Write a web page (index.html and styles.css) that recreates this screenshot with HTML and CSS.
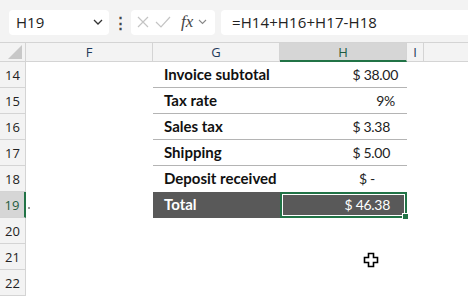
FILE: index.html
```html
<!DOCTYPE html>
<html lang="en">
<head>
  <meta charset="UTF-8" />
  <title>Invoice total</title>
  <link rel="stylesheet" href="styles.css">
</head>
<body>

  <div class="toolbar">
    <div class="namebox">
      <span>H19</span>
      <svg class="chev" width="10" height="6" viewBox="0 0 10 6"><path d="M1 1l4 4 4-4" fill="none" stroke="#333" stroke-width="1.3"/></svg>
    </div>
    <div class="dots">⋮</div>
    <div class="funcbox">
      <svg width="14" height="14" viewBox="0 0 14 14"><path d="M2 2l10 10M12 2L2 12" stroke="#c4c4c4" stroke-width="1.2"/></svg>
      <svg width="16" height="14" viewBox="0 0 16 14"><path d="M1 7l5 5L15 2" fill="none" stroke="#c4c4c4" stroke-width="1.2"/></svg>
      <span class="fx">fx</span>
      <svg width="9" height="6" viewBox="0 0 9 6"><path d="M1 1l3.5 3.5L8 1" fill="none" stroke="#888" stroke-width="1.1"/></svg>
    </div>
    <div class="formula">=H14+H16+H17-H18</div>
  </div>

  <div class="sheet">
    <div class="corner"><svg width="14" height="14" viewBox="0 0 14 14"><path d="M14 0v14H0z" fill="#c8c8c8"/></svg></div>
    <div class="colhead">F</div>
    <div class="colhead">G</div>
    <div class="colhead sel">H</div>
    <div class="colhead">I</div>
    <div class="colhead blank"></div>

    <div class="rowhead">14</div><div class="cell"></div>
    <div class="cell label line">Invoice subtotal</div><div class="cell value line pr9">$ 38.00</div>
    <div class="cell"></div><div class="cell"></div>

    <div class="rowhead">15</div><div class="cell"></div>
    <div class="cell label line">Tax rate</div><div class="cell value line pr12">9%</div>
    <div class="cell"></div><div class="cell"></div>

    <div class="rowhead">16</div><div class="cell"></div>
    <div class="cell label line">Sales tax</div><div class="cell value line pr17">$ 3.38</div>
    <div class="cell"></div><div class="cell"></div>

    <div class="rowhead">17</div><div class="cell"></div>
    <div class="cell label line">Shipping</div><div class="cell value line pr17">$ 5.00</div>
    <div class="cell"></div><div class="cell"></div>

    <div class="rowhead">18</div><div class="cell"></div>
    <div class="cell label">Deposit received</div><div class="cell value pr32">$ -</div>
    <div class="cell"></div><div class="cell"></div>

    <div class="rowhead sel">19<span class="speck"></span></div><div class="cell"></div>
    <div class="cell label total">Total</div>
    <div class="cell value total active pr17"><span class="handle"></span>$ 46.38</div>
    <div class="cell"></div><div class="cell"></div>

    <div class="rowhead">20</div><div class="cell"></div><div class="cell"></div><div class="cell"></div><div class="cell"></div><div class="cell"></div>
    <div class="rowhead">21</div><div class="cell"></div><div class="cell"></div><div class="cell"></div><div class="cell"></div><div class="cell"></div>
    <div class="rowhead">22</div><div class="cell"></div><div class="cell"></div><div class="cell"></div><div class="cell"></div><div class="cell"></div>

    <svg class="cursor" width="16" height="16" viewBox="0 0 16 16">
      <path d="M5.5 1.5h5v4h4v5h-4v4h-5v-4h-4v-5h4z" fill="#fff" stroke="#000" stroke-width="1.6"/>
    </svg>
  </div>

</body>
</html>
```

FILE: styles.css
```css
body {
  margin: 0;
  width: 468px;
  height: 296px;
  overflow: hidden;
  background: #fff;
  font-family: 'Open Sans', sans-serif;
  color: #222;
}
.toolbar {
  height: 42px;
  background: #f3f3f3;
  display: flex;
  align-items: center;
  padding-left: 9px;
  box-sizing: border-box;
  padding-top: 2px;
}
.namebox, .funcbox, .formula {
  background: #fff;
  height: 25px;
  border-radius: 4px;
  display: flex;
  align-items: center;
  box-sizing: border-box;
}
.namebox {
  width: 100px;
  padding: 0 6px 0 7px;
  justify-content: space-between;
  font-size: 15px;
  color: #222;
}
.dots {
  width: 22px;
  text-align: center;
  font-size: 15px;
  font-weight: bold;
  color: #444;
}
.funcbox {
  width: 84px;
  padding: 0 5px 0 5px;
  gap: 5px;
}
.fx {
  font-family: 'Liberation Serif', serif;
  font-style: italic;
  font-size: 17px;
  color: #444;
  margin-left: 5px;
}
.formula {
  flex: 1;
  margin-left: 6px;
  padding-left: 11px;
  border-radius: 4px 0 0 4px;
  font-size: 15px;
  letter-spacing: 0.1px;
}
.sheet {
  position: relative;
  display: grid;
  grid-template-columns: 26px 127px 127px 127px 17px 1fr;
  grid-template-rows: 20px repeat(9, 26px);
}
.corner, .colhead {
  background: #f3f3f3;
  border-top: 1px solid #d4d4d4;
  border-bottom: 1px solid #d4d4d4;
  border-right: 1px solid #d4d4d4;
  box-sizing: border-box;
}
.corner {
  display: flex;
  align-items: flex-end;
  justify-content: flex-end;
  padding: 0 3px 2px 0;
}
.colhead {
  text-align: center;
  font-size: 13px;
  line-height: 18px;
  color: #1f3a5a;
}
.colhead.blank {
  border-right: none;
}
.colhead.sel {
  background: #d6d6d6;
  border-bottom: 2px solid #217346;
  color: #1e5c40;
}
.rowhead {
  position: relative;
  background: #f3f3f3;
  border-right: 1px solid #d4d4d4;
  border-bottom: 1px solid #d4d4d4;
  box-sizing: border-box;
  font-size: 13px;
  line-height: 26px;
  text-align: center;
  color: #222;
}
.rowhead.sel {
  background: #d6d6d6;
  border-right: 2px solid #217346;
  color: #1e5c40;
}
.speck {
  position: absolute;
  right: -6px;
  top: 15px;
  width: 2px;
  height: 2px;
  background: #999;
}
.cell {
  box-sizing: border-box;
  font-size: 14px;
  line-height: 25px;
  white-space: nowrap;
}
.line {
  border-bottom: 1px solid #b4b4b4;
}
.label {
  font-family: Lato, sans-serif;
  font-weight: bold;
  font-size: 15px;
  padding-left: 11px;
  color: #111;
}
.value {
  text-align: right;
  font-family: Lato, sans-serif;
  font-size: 14px;
  letter-spacing: -0.3px;
  color: #222;
}
.pr9 { padding-right: 9px; }
.pr12 { padding-right: 12px; }
.pr17 { padding-right: 17px; }
.pr32 { padding-right: 32px; }
.total {
  background: #595959;
  color: #fff;
}
.active {
  position: relative;
  border: 2px solid #217346;
  box-shadow: inset 0 0 0 1px #fff;
  line-height: 21px;
  padding-right: 15px;
}
.handle {
  position: absolute;
  right: -4px;
  bottom: -4px;
  width: 5px;
  height: 5px;
  background: #217346;
  border: 1px solid #fff;
}
.cursor {
  position: absolute;
  left: 363px;
  top: 210px;
}
```
